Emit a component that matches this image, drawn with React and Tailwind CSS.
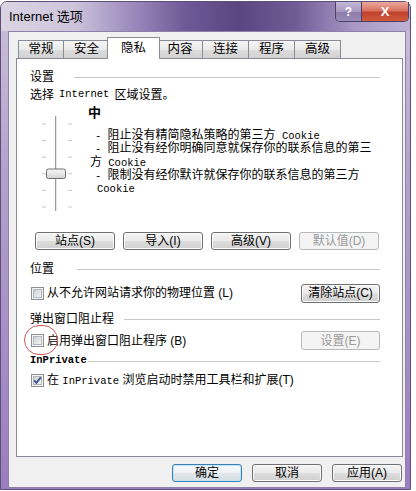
import React from "react";

const SANS = "font-['Liberation_Sans','Noto_Sans_CJK_SC',sans-serif]";
const MONO = "font-['Liberation_Mono','Noto_Sans_CJK_SC',monospace]";

function Btn({ children, className = "", disabled = false, def = false }) {
  let look =
    "border-[#707070] bg-[linear-gradient(#f3f3f3_0%,#ebebeb_48%,#dddddd_52%,#cfcfcf_100%)] text-black shadow-[inset_0_0_0_1px_#fbfbfb]";
  if (disabled) look = "border-[#b5b9bc] bg-[#f4f4f4] text-[#9a9a9a]";
  if (def)
    look =
      "border-[#3c7fb1] bg-[linear-gradient(#f6f9fb_0%,#eef2f5_48%,#e1e7ec_52%,#d6dde3_100%)] text-black shadow-[inset_0_0_0_1px_#bfe3f8]";
  return (
    <div
      className={`flex items-center justify-center rounded-[3px] border text-[12px] leading-none ${look} ${className}`}
    >
      {children}
    </div>
  );
}

function Check({ checked = false }) {
  return (
    <svg width="13" height="13" viewBox="0 0 13 13" className="shrink-0">
      <defs>
        <linearGradient id={checked ? "cbg1" : "cbg0"} x1="0" y1="0" x2="1" y2="1">
          <stop offset="0" stopColor="#cbcfd5" />
          <stop offset="1" stopColor="#f6f6f6" />
        </linearGradient>
      </defs>
      <rect x="0.5" y="0.5" width="12" height="12" fill="#f4f4f4" stroke="#8e8f8f" />
      <rect x="2.5" y="2.5" width="8" height="8" fill={`url(#${checked ? "cbg1" : "cbg0"})`} stroke="#b4b7bd" strokeWidth="1" />
      {checked && (
        <path d="M3.2 6.4 L5.4 8.8 L9.8 3.4" fill="none" stroke="#3c4f8e" strokeWidth="1.8" />
      )}
    </svg>
  );
}

function Section({ label, gap, mono = false, className = "" }) {
  return (
    <div className={`flex h-[16px] items-center ${className}`}>
      <span className={mono ? `${MONO} text-[10.5px] font-bold` : "text-[12px]"}>{label}</span>
      <div className={`h-px flex-1 bg-[#c8c8c8] ${gap}`} />
    </div>
  );
}

function Slider() {
  const ticks = [11, 27.6, 44.2, 60.8, 77.4, 94];
  return (
    <svg width="40" height="100" viewBox="0 0 40 100" className="mt-[8px] ml-[10px] shrink-0">
      <defs>
        <linearGradient id="thumb" x1="0" y1="0" x2="0" y2="1">
          <stop offset="0" stopColor="#f6f6f6" />
          <stop offset="0.5" stopColor="#e6e6e6" />
          <stop offset="1" stopColor="#d2d2d2" />
        </linearGradient>
      </defs>
      <rect x="15" y="3" width="2" height="95" fill="#e6e6e6" />
      <line x1="15.5" y1="3" x2="15.5" y2="98" stroke="#9c9c9c" strokeWidth="1" />
      {ticks.map((y, i) => (
        <g key={i}>
          <line x1="2" y1={y} x2="6" y2={y} stroke="#c6c6c6" strokeWidth="1" />
          <line x1="28" y1={y} x2="32" y2={y} stroke="#c6c6c6" strokeWidth="1" />
        </g>
      ))}
      <rect x="6.5" y="56" width="19" height="9.5" rx="2" fill="url(#thumb)" stroke="#6f6f6f" />
    </svg>
  );
}

export default function App() {
  const tabs = [
    { t: "常规", w: "w-[46px]" },
    { t: "安全", w: "w-[47px]" },
    { t: "隐私", sel: true },
    { t: "内容", w: "w-[46px]" },
    { t: "连接", w: "w-[47px]" },
    { t: "程序", w: "w-[47px]" },
    { t: "高级", w: "w-[47px]" },
  ];
  return (
    <div className={`w-[416px] h-[491px] overflow-hidden bg-white ${SANS} text-black`}>
      <div className="mt-[1px] flex h-[489px] w-[411px] flex-col rounded-t-[7px] border border-[#5e4e7a] bg-[linear-gradient(180deg,#cbc1da_0%,#b3a2cc_35%,#9a7ec0_100%)]">
        {/* Title bar */}
        <div className="flex h-[29px] items-start justify-between rounded-t-[6px] bg-[linear-gradient(90deg,#dad4e3_0%,#cdc4db_18%,#9d8abd_32%,#6e5a96_45%,#5a4782_58%,#6f5c95_72%,#a896c6_86%,#bfb1d5_100%)]">
          <div className="ml-[8px] mt-[6px] text-[13px] leading-[17px] text-black">Internet 选项</div>
          <div className="mr-[1px] flex h-[20px] overflow-hidden rounded-b-[5px] border border-t-0 border-[#4a4260]">
            <div className="flex w-[26px] items-center justify-center border-r border-[#4a4260] bg-[linear-gradient(#c5bad6_0%,#a697c0_50%,#8c7cab_52%,#9a8bb8_100%)] text-[12px] font-bold leading-none text-white">
              ?
            </div>
            <div className="flex w-[46px] items-center justify-center bg-[linear-gradient(#e9a99c_0%,#d7705f_48%,#c2412d_52%,#cf5a3c_100%)] text-[13px] font-bold leading-none text-white">
              X
            </div>
          </div>
        </div>

        {/* Client area */}
        <div className="mb-[1px] ml-[7px] mr-[4px] flex flex-1 flex-col border border-[#8f7fab] bg-[#f0f0f0]">
          <div className="ml-[7px] mr-[2px] mt-[4px]">
            {/* Tabs */}
            <div className="relative z-10 flex h-[22px] items-end pl-[2px]">
              {tabs.map((tab, i) =>
                tab.sel ? (
                  <div
                    key={i}
                    className="relative z-10 -mb-px -ml-[3px] -mr-[2px] flex h-[22px] w-[53px] items-start justify-center border border-b-0 border-[#898c95] bg-white pt-[2px] text-[12.5px] leading-[16px]"
                  >
                    {tab.t}
                  </div>
                ) : (
                  <div
                    key={i}
                    className={`${tab.w} ${i === 0 ? "" : "-ml-px"} flex h-[18px] items-center justify-center border border-b-0 border-[#898c95] bg-[linear-gradient(#f4f4f4_0%,#eaeaea_50%,#dcdcdc_52%,#d2d2d2_100%)] text-[12.5px] leading-none`}
                  >
                    {tab.t}
                  </div>
                )
              )}
            </div>

            {/* Panel */}
            <div className="relative flex h-[399px] flex-col border border-[#898c95] bg-white pl-[13px] pr-[22px]">
              <Section label="设置" gap="ml-[20px]" className="mt-[10px]" />
              <div className="mt-[2px] flex h-[16px] items-center text-[12px]">
                <span>选择</span>
                <span className={`${MONO} mx-[5px] text-[10.5px]`}>Internet</span>
                <span>区域设置。</span>
              </div>

              {/* Slider region */}
              <div className="mt-[2px] flex h-[108px]">
                <Slider />
                <div className="ml-[8px] flex flex-col">
                  <div className="h-[16px] text-[13px] font-bold leading-[16px]">中</div>
                  <div className="ml-[7px] mt-[8px] text-[12px] leading-[12.3px]">
                    <div className="whitespace-nowrap">
                      <span className={`${MONO} text-[10.5px]`}>- </span>阻止没有精简隐私策略的第三方
                      <span className={`${MONO} text-[10.5px]`}> Cookie</span>
                    </div>
                    <div className="whitespace-nowrap">
                      <span className={`${MONO} text-[10.5px]`}>- </span>阻止没有经你明确同意就保存你的联系信息的第三
                    </div>
                    <div className="-ml-[5px] whitespace-nowrap">
                      方<span className={`${MONO} text-[10.5px]`}> Cookie</span>
                    </div>
                    <div className="whitespace-nowrap">
                      <span className={`${MONO} text-[10.5px]`}>- </span>限制没有经你默许就保存你的联系信息的第三方
                    </div>
                    <div className="ml-[2px] whitespace-nowrap">
                      <span className={`${MONO} text-[10.5px]`}>Cookie</span>
                    </div>
                  </div>
                </div>
              </div>

              {/* Buttons */}
              <div className="mt-[19px] flex h-[18px] gap-[8px] pl-[5px]">
                <Btn className="w-[80px]">站点(S)</Btn>
                <Btn className="w-[80px]">导入(I)</Btn>
                <Btn className="w-[80px]">高级(V)</Btn>
                <Btn className="w-[80px]" disabled>
                  默认值(D)
                </Btn>
              </div>

              <Section label="位置" gap="ml-[23px]" className="mt-[11px]" />
              <div className="mt-[6px] flex h-[20px] items-center justify-between">
                <div className="flex items-center gap-[3px] pl-[1px] text-[12px]">
                  <Check />
                  <span>从不允许网站请求你的物理位置 (L)</span>
                </div>
                <Btn className="h-[19px] w-[79px]">清除站点(C)</Btn>
              </div>

              <Section label="弹出窗口阻止程" gap="ml-[10px]" className="mt-[8px]" />
              <div className="mt-[4px] flex h-[19px] items-center justify-between">
                <div className="flex items-center gap-[3px] pl-[1px] text-[12px]">
                  <Check />
                  <span>启用弹出窗口阻止程序 (B)</span>
                </div>
                <Btn className="h-[19px] w-[79px]" disabled>
                  设置(E)
                </Btn>
              </div>

              <Section label="InPrivate" mono gap="ml-[1px]" className="mt-[3px]" />
              <div className="mt-[3px] flex h-[16px] items-center gap-[3px] pl-[1px] text-[12px]">
                <Check checked />
                <span>
                  在 <span className={`${MONO} text-[10.5px]`}>InPrivate</span> 浏览启动时禁用工具栏和扩展(T)
                </span>
              </div>

              {/* red annotation circle */}
              <div className="pointer-events-none absolute left-[7px] top-[266px] h-[30px] w-[34px] rounded-full border border-[#d0575a]" />
            </div>

            {/* Bottom buttons */}
            <div className="mt-[7px] flex justify-end gap-[10px] pr-[1px]">
              <Btn className="h-[18px] w-[70px]" def>
                确定
              </Btn>
              <Btn className="h-[18px] w-[70px]">取消</Btn>
              <Btn className="h-[18px] w-[70px]">应用(A)</Btn>
            </div>
          </div>
        </div>
      </div>
    </div>
  );
}
